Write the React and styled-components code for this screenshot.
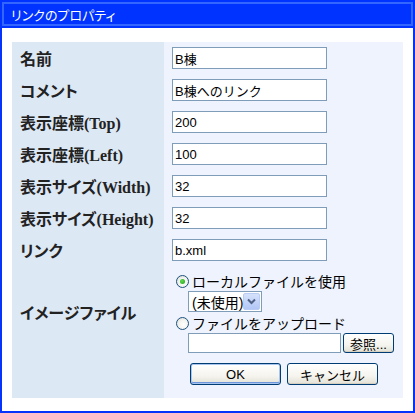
import React from 'react';
import styled, { createGlobalStyle } from 'styled-components';

const GlobalStyle = createGlobalStyle`
  html, body {
    margin: 0;
    padding: 0;
    background: #ffffff;
  }
  * {
    box-sizing: border-box;
  }
`;

const jp = `"Liberation Sans", "Noto Sans CJK JP", sans-serif`;

const Window = styled.div`
  width: 415px;
  height: 413px;
  border: 2px solid #0533fb;
  border-top: 0;
  background: #ffffff;
  display: flex;
  flex-direction: column;
`;

const TitleBar = styled.div`
  height: 28px;
  margin: 0 -2px;
  background: #0033ff;
  border: 2px solid #0033ff;
  box-shadow: inset 0 0 0 2px #3366ff;
  color: #ffffff;
  font-family: ${jp};
  font-size: 13px;
  font-feature-settings: "palt";
  display: flex;
  align-items: center;
  padding-left: 9px;
`;

const Body = styled.div`
  flex: 1;
  padding: 14px 10px 13px 10px;
`;

const Form = styled.div`
  display: grid;
  grid-template-columns: 152px 239px;
  grid-template-rows: repeat(7, 32px) 92px 40px;
`;

const Label = styled.div`
  background: #dde8f5;
  display: flex;
  align-items: center;
  padding-left: 8px;
  font-family: "Liberation Serif", "Noto Sans CJK JP", serif;
  font-weight: bold;
  font-size: 16px;
  font-feature-settings: "palt";
  color: #222222;
  white-space: nowrap;
`;

const Cell = styled.div`
  background: #eef3fd;
  padding: ${p => p.$pad || '5px 0 0 8px'};
  display: flex;
  flex-direction: ${p => (p.$column ? 'column' : 'row')};
  align-items: flex-start;
  gap: ${p => p.$gap || 0}px;
`;

const TextInput = styled.input`
  width: ${p => p.$w || 155}px;
  height: ${p => p.$h || 22}px;
  border: 1px solid #7f9db9;
  background: #ffffff;
  padding: 0 2px;
  margin: 0;
  font-family: ${jp};
  font-size: 13px;
  color: #000000;
  outline: none;
`;

const RadioLine = styled.label`
  height: 18px;
  display: flex;
  align-items: center;
  gap: 3px;
  margin-top: ${p => p.$mt || 0}px;
  font-family: ${jp};
  font-size: 14px;
  color: #000000;
  white-space: nowrap;
`;

const Radio = styled.span`
  width: 13px;
  height: 13px;
  border-radius: 50%;
  border: 1px solid #1c5180;
  background: radial-gradient(circle at 60% 60%, #ffffff 0%, #f3f3ef 50%, #d6d6ce 100%);
  display: flex;
  align-items: center;
  justify-content: center;
  flex: none;

  &::after {
    content: '';
    width: 5px;
    height: 5px;
    border-radius: 50%;
    background: ${p => (p.$checked ? 'radial-gradient(circle at 40% 40%, #64dc50, #1a9c1a)' : 'transparent')};
  }
`;

const Indented = styled.div`
  margin-left: 12px;
  display: flex;
  align-items: center;
  gap: ${p => p.$gap || 0}px;
  margin-top: ${p => p.$mt || 0}px;
`;

const Select = styled.div`
  width: 74px;
  height: 21px;
  border: 1px solid #7f9db9;
  background: #ffffff;
  display: flex;
  align-items: center;
  justify-content: space-between;
  padding: 1px;
  font-family: ${jp};
  font-size: 14px;
  color: #000000;
`;

const SelectText = styled.span`
  padding-left: 2px;
  white-space: nowrap;
`;

const DropButton = styled.span`
  width: 17px;
  height: 17px;
  border-radius: 2px;
  border: 1px solid #b8ccf4;
  background: linear-gradient(#d6e2fc, #b2c6f5);
  display: flex;
  align-items: center;
  justify-content: center;
`;

const Button = styled.button`
  width: ${p => p.$w || 91}px;
  height: ${p => p.$h || 22}px;
  margin: 0;
  padding: 0;
  border: 1px solid #003c74;
  border-radius: 3px;
  background: linear-gradient(#ffffff 0%, #f5f4ee 60%, #e3e1d6 100%);
  box-shadow: ${p => (p.$default ? 'inset 0 0 0 1px #a8c5f0, inset 0 -1px 0 1px #6d95dc' : 'inset 0 -1px 0 #d6d0c0')};
  font-family: ${jp};
  font-size: 13px;
  color: #000000;
  cursor: pointer;
`;

const fields = [
  ['名前', 'B棟'],
  ['コメント', 'B棟へのリンク'],
  ['表示座標(Top)', '200'],
  ['表示座標(Left)', '100'],
  ['表示サイズ(Width)', '32'],
  ['表示サイズ(Height)', '32'],
  ['リンク', 'b.xml'],
];

export default function App() {
  return (
    <>
      <GlobalStyle />
      <Window>
        <TitleBar>リンクのプロパティ</TitleBar>
        <Body>
          <Form>
            {fields.map(([label, value]) => (
              <React.Fragment key={label}>
                <Label>{label}</Label>
                <Cell>
                  <TextInput defaultValue={value} />
                </Cell>
              </React.Fragment>
            ))}

            <Label>イメージファイル</Label>
            <Cell $column $pad="6px 0 0 12px">
              <RadioLine>
                <Radio $checked />
                ローカルファイルを使用
              </RadioLine>
              <Indented $mt={1}>
                <Select>
                  <SelectText>(未使用)</SelectText>
                  <DropButton>
                    <svg width="9" height="7" viewBox="0 0 9 7">
                      <path d="M1 1.5 L4.5 5 L8 1.5" fill="none" stroke="#4d6185" strokeWidth="2" />
                    </svg>
                  </DropButton>
                </Select>
              </Indented>
              <RadioLine $mt={2}>
                <Radio />
                ファイルをアップロード
              </RadioLine>
              <Indented $gap={2} $mt={1}>
                <TextInput $w={153} $h={20} />
                <Button $w={51} $h={20}>参照...</Button>
              </Indented>
            </Cell>

            <Label />
            <Cell $pad="5px 0 0 26px" $gap={6}>
              <Button $default>OK</Button>
              <Button>キャンセル</Button>
            </Cell>
          </Form>
        </Body>
      </Window>
    </>
  );
}
